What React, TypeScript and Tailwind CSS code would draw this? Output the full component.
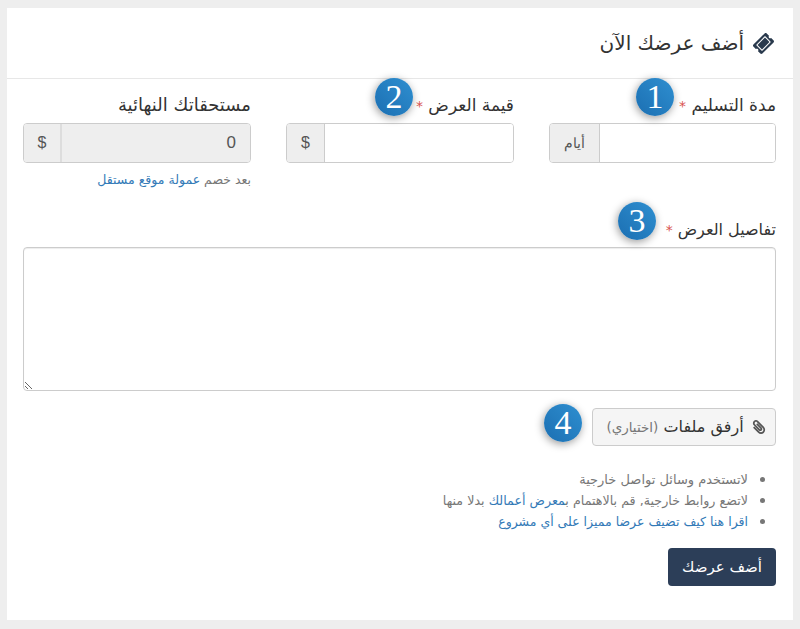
import React from 'react';
import { FaPaperclip, FaTicketAlt } from 'react-icons/fa';

const font = { fontFamily: '"DejaVu Sans", sans-serif' };

const StepBadge: React.FC<{ n: number; className: string }> = ({ n, className }) => (
  <span
    className={`absolute flex h-[38px] w-[38px] items-center justify-center rounded-full bg-gradient-to-tr from-[#1b6fb2] to-[#2f8fd0] text-[34px] leading-none text-white shadow-[-1px_2px_9px_rgba(0,0,0,0.4)] font-['Liberation_Serif',serif] ${className}`}
  >
    {n}
  </span>
);

const Addon: React.FC<{ children: React.ReactNode; className?: string }> = ({ children, className = '' }) => (
  <span className={`flex w-[38px] shrink-0 items-center justify-center bg-[#eee] text-[16px] text-[#555] font-['Liberation_Sans',sans-serif] ${className}`}>
    {children}
  </span>
);

const App: React.FC = () => {
  return (
    <div dir="rtl" className="h-[629px] overflow-hidden bg-[#eee] pb-[9px] pl-[7px] pr-[7px] pt-2 text-[#333]" style={font}>
      <div className="h-[612px] bg-white">
        <div className="flex h-[71px] items-center gap-[10px] border-b border-[#e7e7e7] pr-[20px]">
          <FaTicketAlt className="h-[19px] w-[19px] -rotate-45 text-[#2a3a4d]" />
          <h2 className="text-[20px] font-normal text-[#333]">أضف عرضك الآن</h2>
        </div>

        <div className="relative pl-4 pr-[17px]">
          <StepBadge n={1} className="right-[119px] -top-px" />
          <StepBadge n={2} className="right-[380px] -top-px" />
          <StepBadge n={3} className="right-[137px] top-[123px]" />
          <StepBadge n={4} className="right-[211px] top-[325px]" />

          <div className="grid grid-cols-[227px_228px_228px] gap-[35px] pt-[14px]">
            <div>
              <label className="block h-[30px] text-[17px] leading-[24px] text-[#333]">
                مدة التسليم <span className="text-[14px] text-[#d9534f]">*</span>
              </label>
              <div className="flex h-[40px] overflow-hidden rounded border border-[#ccc]">
                <input className="min-w-0 flex-1 bg-white" />
                <Addon className="w-[50px] border-r border-[#ccc] !text-[14px] font-['DejaVu_Sans',sans-serif]">أيام</Addon>
              </div>
            </div>
            <div>
              <label className="block h-[30px] text-[17px] leading-[24px] text-[#333]">
                قيمة العرض <span className="text-[14px] text-[#d9534f]">*</span>
              </label>
              <div className="flex h-[40px] overflow-hidden rounded border border-[#ccc]">
                <input className="min-w-0 flex-1 bg-white" />
                <Addon className="border-r border-[#ccc]">$</Addon>
              </div>
            </div>
            <div>
              <label className="block h-[30px] text-[18px] leading-[24px] text-[#333]">مستحقاتك النهائية</label>
              <div className="flex h-[40px] overflow-hidden rounded border border-[#ccc]">
                <div className="flex flex-1 items-center bg-[#eee] px-[14px] text-[17px] text-[#555] font-['Liberation_Sans',sans-serif]">0</div>
                <Addon className="border-r-2 border-[#ddd]">$</Addon>
              </div>
              <p className="mt-[9px] text-[12.5px] leading-4 text-[#777]">
                بعد خصم <a className="text-[#337ab7]">عمولة موقع مستقل</a>
              </p>
            </div>
          </div>

          <label className="mt-[30px] block h-[29px] text-[16px] leading-[24px] text-[#333]">
            تفاصيل العرض <span className="text-[14px] text-[#d9534f]">*</span>
          </label>
          <textarea className="block h-[144px] w-full resize rounded border border-[#ccc] bg-white shadow-[inset_0_1px_1px_rgba(0,0,0,0.075)]" />

          <div className="mt-[17px]">
            <button className="flex h-[38px] w-[184px] items-center justify-center gap-[8px] rounded border border-[#ccc] bg-[#f5f5f5] pl-1 text-[16px] text-[#333]">
              <FaPaperclip className="h-[14px] w-[14px] -scale-x-100 text-[#555]" />
              <span>
                أرفق ملفات <small className="text-[13.5px] text-[#777]">(اختياري)</small>
              </span>
            </button>
          </div>

          <ul className="mt-[22px] list-disc pr-[28px] leading-[21px] text-[#777] marker:text-[17px] marker:text-[#777]">
            <li className="h-[21px] text-[13px]">لاتستخدم وسائل تواصل خارجية</li>
            <li className="h-[21px] text-[12.7px]">
              لاتضع روابط خارجية, قم بالاهتمام ب<a className="text-[#337ab7]">معرض أعمالك</a> بدلا منها
            </li>
            <li className="h-[21px] text-[12.5px]">
              <a className="text-[#337ab7]">اقرا هنا كيف تضيف عرضا مميزا على أي مشروع</a>
            </li>
          </ul>

          <button className="mt-[17px] h-[38px] w-[108px] rounded bg-[#2c3e58] text-[15px] text-white">أضف عرضك</button>
        </div>
      </div>
    </div>
  );
};

export default App;
